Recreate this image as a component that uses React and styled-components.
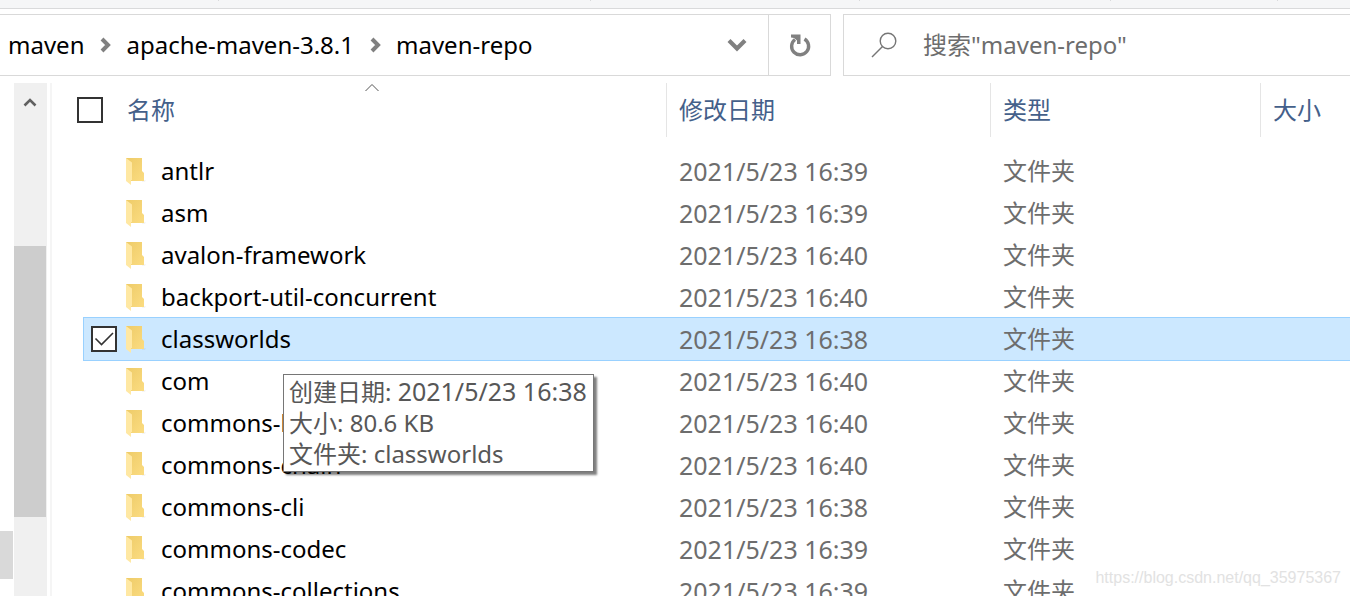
import { useState } from "react";
import styled, { createGlobalStyle } from "styled-components";

const GlobalStyle = createGlobalStyle`
  * {
    box-sizing: border-box;
  }

  body {
    margin: 0;
    overflow: hidden;
    background-color: #fff;
    font-family: "Noto Sans", "Noto Sans CJK SC", sans-serif;
    font-size: 24px;
    line-height: 32px;
    color: #000;
  }

  button,
  input {
    font: inherit;
  }
`;

const Window = styled.div`
  position: relative;
  display: flex;
  flex-direction: column;
  height: 100vh;
  overflow: hidden;
`;

const Ribbon = styled.div`
  flex: none;
  display: grid;
  grid-template-columns: 219fr 372fr 269fr 251fr 167fr 72fr;
  height: 9px;
  border-bottom: 1px solid #d9dadb;
  background-color: #f5f6f7;
`;

const RibbonGroup = styled.div`
  height: 1px;
  border-right: 1px solid #d9dadb;

  &:last-child {
    border-right: 0;
  }
`;

const Toolbar = styled.div`
  flex: none;
  display: grid;
  grid-template-columns: minmax(0, 1fr) 507px;
  gap: 12px;
  height: 62px;
  margin: 5px 0 7px;
`;

const AddressBar = styled.nav`
  display: flex;
  border: 1px solid #d9d9d9;
  border-left: 0;
`;

const Crumbs = styled.ol`
  flex: 1;
  display: flex;
  align-items: center;
  gap: 14px;
  margin: 0;
  padding: 0 0 0 8px;
  list-style: none;
  white-space: nowrap;

  li {
    display: flex;
    align-items: center;
    gap: 16px;
  }

  a {
    color: #000;
    text-decoration: none;
  }
`;

const BarButton = styled.button`
  display: flex;
  align-items: center;
  justify-content: center;
  width: 62px;
  padding: 0;
  border: 0;
  border-left: ${({ $divided }) => ($divided ? "1px solid #d9d9d9" : "0")};
  background: none;
`;

const SearchBox = styled.label`
  display: flex;
  align-items: center;
  gap: 26px;
  padding-left: 27px;
  border: 1px solid #d9d9d9;
  border-right: 0;

  input {
    flex: 1;
    min-width: 0;
    padding: 0;
    border: 0;
    outline: 0;
    background: none;
  }

  input::placeholder {
    color: #6d6d6d;
    opacity: 1;
  }
`;

const Body = styled.div`
  flex: 1;
  min-height: 0;
  display: grid;
  grid-template-rows: minmax(0, 1fr);
  grid-template-columns: 14px 33px minmax(0, 1fr);
`;

const NavEdge = styled.div`
  display: grid;
  grid-template-rows: 448fr 48fr 17fr;
  padding-right: 1px;
`;

const ScrollTrack = styled.div`
  display: grid;
  grid-template-rows: 163fr 271fr 79fr;
  padding-right: 1px;
  background-color: #f0f0f0;

  button {
    height: 38px;
    padding: 0;
    border: 0;
    background: none;
    line-height: 0;
  }
`;

const Thumb = styled.div`
  grid-row: 2;
  background-color: ${({ $faded }) => ($faded ? "#d9d9d9" : "#cdcdcd")};
`;

const ListPane = styled.main`
  margin-left: 3px;
  border-left: 2px solid #f5f5f5;
`;

const FileTable = styled.table`
  display: block;

  thead,
  tbody {
    display: block;
  }

  tbody {
    padding-top: 13px;
  }

  tr {
    display: grid;
    grid-template-columns: minmax(0, 1fr) 324px 270px 90px;
  }

  th,
  td {
    display: flex;
    align-items: center;
    padding: 0 0 0 13px;
    text-align: left;
    font-weight: 400;
    white-space: nowrap;
  }
`;

const HeadRow = styled.tr`
  height: 54px;
  margin-left: 25px;
  color: #44608a;

  th + th {
    padding-left: 12px;
    border-left: 1px solid #e5e5e5;
  }

  th:first-child {
    position: relative;
    gap: 24px;
    padding-left: 0;
  }
`;

const SortMark = styled.svg`
  position: absolute;
  top: 0;
  left: 50%;
  margin-left: -7px;
`;

const FileRow = styled.tr`
  height: 42px;
  margin-left: 32px;
  color: #6d6d6d;
  background-color: ${({ $selected }) => ($selected ? "#cce8ff" : "transparent")};
  box-shadow: ${({ $selected }) => ($selected ? "0 0 0 1px #99d1ff" : "none")};

  td:first-child {
    position: relative;
    gap: 8px;
    padding-left: 7px;
    color: #000;
  }

  &:hover input {
    opacity: 1;
  }
`;

const DateText = styled.time`
  font-size: 25px;
`;

const CheckBox = styled.input`
  flex: none;
  appearance: none;
  width: 26px;
  height: 26px;
  margin: 0;
  border: 2px solid #333;
  background-color: #fff;
  opacity: ${({ $quiet }) => ($quiet ? 0 : 1)};

  &:checked {
    background-image: url("data:image/svg+xml,%3Csvg xmlns='http://www.w3.org/2000/svg' viewBox='0 0 22 22'%3E%3Cpath d='M2.5 10.5 8.5 16.5 20 5' fill='none' stroke='%23333' stroke-width='1.6'/%3E%3C/svg%3E");
  }
`;

const Tooltip = styled.div`
  position: absolute;
  z-index: 10;
  top: 56px;
  left: 199px;
  padding: 1px 6px 2px 5px;
  border: 1px solid #767676;
  background-color: #fff;
  box-shadow: 3px 3px 2px rgba(0, 0, 0, 0.5);
  line-height: 31px;
  color: #575757;
`;

const Watermark = styled.span`
  position: absolute;
  right: 9px;
  bottom: 8px;
  font-family: "Liberation Sans", sans-serif;
  font-size: 16px;
  line-height: 20px;
  color: #e2e2e2;
`;

const files = [
  { name: "antlr", date: "2021/5/23 16:39" },
  { name: "asm", date: "2021/5/23 16:39" },
  { name: "avalon-framework", date: "2021/5/23 16:40" },
  { name: "backport-util-concurrent", date: "2021/5/23 16:40" },
  { name: "classworlds", date: "2021/5/23 16:38", size: "80.6 KB" },
  { name: "com", date: "2021/5/23 16:40" },
  { name: "commons-beanutils", date: "2021/5/23 16:40" },
  { name: "commons-chain", date: "2021/5/23 16:40" },
  { name: "commons-cli", date: "2021/5/23 16:38" },
  { name: "commons-codec", date: "2021/5/23 16:39" },
  { name: "commons-collections", date: "2021/5/23 16:39" },
];

const ribbonGroups = ["clipboard", "organize", "new", "open", "select", "rest"];

function CrumbArrow() {
  return (
    <svg width="12" height="16" viewBox="0 0 12 16" aria-hidden="true">
      <path d="M2 2 8 8 2 14" fill="none" stroke="#808080" strokeWidth="4" />
    </svg>
  );
}

function FolderIcon() {
  return (
    <svg width="28" height="28" viewBox="0 0 28 28" aria-hidden="true">
      <defs>
        <linearGradient id="folderBack" x1="0" y1="0" x2="1" y2="1">
          <stop offset="0" stopColor="#eecb68" />
          <stop offset="1" stopColor="#fbdc81" />
        </linearGradient>
      </defs>
      <path d="M17 23h4l-1 2h-3z" fill="#000" opacity="0.04" />
      <path d="M1 1h16v13l2 2v8H1z" fill="url(#folderBack)" />
      <path d="M1 1 7 5.5V23H6v5L1 24z" fill="#ffe8a3" />
    </svg>
  );
}

function App() {
  // state
  const [selected, setSelected] = useState("classworlds");

  return (
    <>
      <GlobalStyle />
      <Window>
        <Ribbon>
          {ribbonGroups.map((group) => (
            <RibbonGroup key={group} />
          ))}
        </Ribbon>
        <Toolbar>
          <AddressBar aria-label="地址">
            <Crumbs>
              <li>
                <a href="#maven">maven</a>
                <CrumbArrow />
              </li>
              <li>
                <a href="#apache-maven">apache-maven-3.8.1</a>
                <CrumbArrow />
              </li>
              <li>
                <a href="#maven-repo">maven-repo</a>
              </li>
            </Crumbs>
            <BarButton aria-label="以前的位置">
              <svg width="20" height="14" viewBox="0 0 20 14">
                <path d="M2 2.5 10 10.5 18 2.5" fill="none" stroke="#808080" strokeWidth="4.2" />
              </svg>
            </BarButton>
            <BarButton $divided aria-label="刷新">
              <svg width="22" height="24" viewBox="0 0 22 24">
                <path
                  d="M6 6.500A8.500 8.500 0 1 0 15.500 6"
                  fill="none"
                  stroke="#808080"
                  strokeWidth="3.400"
                />
                <path d="M2 1.500h9.500v9.500H8V7.500L5 5 2 4.500z" fill="#808080" />
              </svg>
            </BarButton>
          </AddressBar>
          <SearchBox>
            <svg width="26" height="26" viewBox="0 0 26 26" aria-hidden="true">
              <g fill="none" stroke="#767676" strokeWidth="1.4">
                <circle cx="17" cy="9" r="7.8" />
                <path d="M11.5 14.5 1 25" />
              </g>
            </svg>
            <input type="text" aria-label="搜索" placeholder={'搜索"maven-repo"'} />
          </SearchBox>
        </Toolbar>
        <Body>
          <NavEdge>
            <Thumb $faded />
          </NavEdge>
          <ScrollTrack>
            <button aria-label="向上滚动">
              <svg width="14" height="12" viewBox="0 0 14 12">
                <path d="M1.5 9.5 7 4l5.5 5.5" fill="none" stroke="#606060" strokeWidth="2.6" />
              </svg>
            </button>
            <Thumb />
          </ScrollTrack>
          <ListPane>
            <FileTable>
              <thead>
                <HeadRow>
                  <th>
                    <CheckBox type="checkbox" aria-label="全选" />
                    名称
                    <SortMark width="14" height="9" viewBox="0 0 14 9" aria-hidden="true">
                      <path d="M.5 8 7 1.5 13.5 8" fill="none" stroke="#555" />
                    </SortMark>
                  </th>
                  <th>修改日期</th>
                  <th>类型</th>
                  <th>大小</th>
                </HeadRow>
              </thead>
              <tbody>
                {files.map(({ name, date, size }) => (
                  <FileRow key={name} $selected={selected === name}>
                    <td>
                      <CheckBox
                        type="checkbox"
                        aria-label={name}
                        $quiet={selected !== name}
                        checked={selected === name}
                        onChange={() => setSelected(selected === name ? "" : name)}
                      />
                      <FolderIcon />
                      {name}
                      {size && selected === name && (
                        <Tooltip role="tooltip">
                          <div>
                            创建日期: <DateText>{date}</DateText>
                          </div>
                          <div>大小: {size}</div>
                          <div>文件夹: {name}</div>
                        </Tooltip>
                      )}
                    </td>
                    <td>
                      <DateText>{date}</DateText>
                    </td>
                    <td>文件夹</td>
                    <td />
                  </FileRow>
                ))}
              </tbody>
            </FileTable>
          </ListPane>
        </Body>
        <Watermark>https://blog.csdn.net/qq_35975367</Watermark>
      </Window>
    </>
  );
}

export default App;
